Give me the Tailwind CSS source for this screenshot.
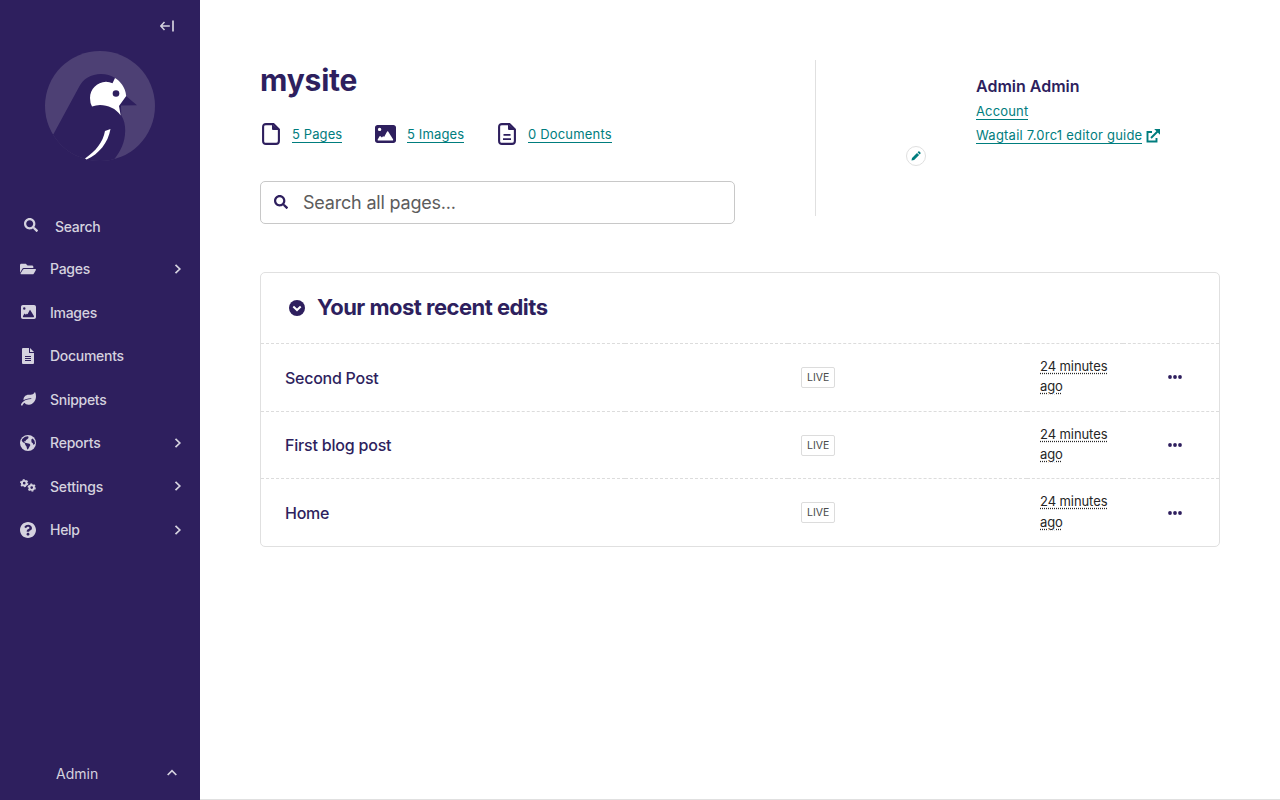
<!DOCTYPE html>
<html lang="en">
<head>
<meta charset="utf-8">
<title>Dashboard</title>
<script src="https://cdn.jsdelivr.net/npm/@tailwindcss/browser@4"></script>
</head>
<body class="font-['Inter','Liberation_Sans',sans-serif] bg-white text-[#2e1f5e]">
<svg class="hidden">
  <symbol id="search" viewBox="0 0 512 512"><path d="M505 442.7L405.3 343c-4.5-4.5-10.6-7-17-7H372c27.6-35.3 44-79.7 44-128C416 93.1 322.9 0 208 0S0 93.1 0 208s93.1 208 208 208c48.3 0 92.7-16.4 128-44v16.3c0 6.4 2.5 12.5 7 17l99.7 99.7c9.4 9.4 24.6 9.4 33.9 0l28.3-28.3c9.4-9.4 9.4-24.6.1-34zM208 336c-70.7 0-128-57.2-128-128 0-70.7 57.2-128 128-128 70.7 0 128 57.2 128 128 0 70.7-57.2 128-128 128z"/></symbol>
  <symbol id="image" viewBox="0 32 512 448" preserveAspectRatio="none"><path fill-rule="evenodd" d="M0 96C0 60.700 28.700 32 64 32H448c35.300 0 64 28.700 64 64V416c0 35.300-28.700 64-64 64H64c-35.300 0-64-28.700-64-64V96zM112 184a42 42 0 1 0 0-84 42 42 0 1 0 0 84zM74 420q-14-6-8-28l46-78q10-12 22 0l34 30 28-30q8-8 14 4l12 10 74-132q12-18 24 0l120 190q10 28-8 34z"/></symbol>
  <symbol id="page" viewBox="0 0 18 22"><path d="M4 1.100H11.500L16.900 6.500V18Q16.900 20.900 14 20.900H4Q1.100 20.900 1.100 18V4Q1.100 1.100 4 1.100z" fill="none" stroke="currentColor" stroke-width="2.100"/><path fill="currentColor" d="M10 1l7 6h-6q-1 0-1-1z"/></symbol>
  <symbol id="chev" viewBox="0 0 8 12"><path d="M1.500 1.800L5.800 6l-4.300 4.200" fill="none" stroke="currentColor" stroke-width="1.700"/></symbol>
  <symbol id="dots" viewBox="0 0 14 4"><circle cx="2" cy="2" r="1.900"/><circle cx="7" cy="2" r="1.900"/><circle cx="12" cy="2" r="1.900"/></symbol>
</svg>
<div class="flex h-[800px] w-[1280px] overflow-hidden">
  <aside class="flex w-[200px] shrink-0 flex-col bg-[#2e1f5e] text-[14px] font-medium tracking-[-0.280px] text-[#d5d2df]">
    <div class="flex h-[51px] justify-end pt-5 pr-[25px]">
      <svg class="h-3 w-[15px]" viewBox="0 0 15 12" fill="none" stroke="currentColor"><path d="M4.500 2L.8 6l3.700 4M.8 6H9.800" stroke-width="1.500"/><path d="M13 0.500v11" stroke-width="1.700"/></svg>
    </div>
    <svg class="mx-auto size-[110px]" viewBox="45 51 110 110">
      <clipPath id="disc"><circle cx="100" cy="106" r="55"/></clipPath>
      <circle cx="100" cy="106" r="55" fill="#4d4074"/>
      <g clip-path="url(#disc)">
        <path fill="#2e1f5e" d="M53.500 134L79 87C83 79 91 74 101 74q8 0 14 4l11 18 11 9.300-16 .2.300 10C124.500 120 125.300 126 125.200 131 125 143 120.500 151 114.500 159L114 163H60L40 140z"/>
      </g>
      <path fill="#fff" d="M115 78C120 81 125.500 87 126.200 96L119 106l1.700 9.500C116 108.500 108 105 100 105q-4 0-8 1.500Q90 103 90 98C90 89 97 82 106 81.700q3.500 0 6.500 1.500z"/>
      <circle cx="116" cy="93.500" r="3.300" fill="#2e1f5e"/>
      <path fill="#fff" d="M105 131l5.500-2C108 143 99 154 86.500 159.500L85 158.500C96 151 103 142 105 131z"/>
    </svg>
    <nav class="mt-[44px] flex flex-col">
      <a class="flex h-[42px] items-center pl-6"><svg class="mr-[17px] mb-[2px] size-[14px]" fill="currentColor"><use href="#search"/></svg><span class="mt-px">Search</span></a>
      <a class="flex h-[43.500px] items-center pr-[18px] pl-5"><svg class="mr-[14px] size-4" viewBox="0 0 576 512" fill="currentColor"><path d="M572.694 292.093L500.270 416.248A63.997 63.997 0 0 1 444.989 448H45.025c-18.523 0-30.064-20.093-20.731-36.093l72.424-124.155A64 64 0 0 1 152 256h399.964c18.523 0 30.064 20.093 20.730 36.093zM152 224h328v-48c0-26.510-21.490-48-48-48H272l-64-64H48C21.490 64 0 85.490 0 112v278.046l69.077-118.418C86.214 242.250 117.989 224 152 224z"/></svg><span class="flex-1">Pages</span><svg class="h-3 w-2"><use href="#chev"/></svg></a>
      <a class="flex h-[43.500px] items-center pl-[21px]"><svg class="mr-[14px] mb-px h-[14px] w-[15px]" fill="currentColor"><use href="#image"/></svg><span>Images</span></a>
      <a class="flex h-[43.500px] items-center pl-[22px]"><svg class="mr-4 h-4 w-3" viewBox="0 0 12 16"><path fill="currentColor" fill-rule="evenodd" d="M1 0H7V4.500Q7 5 7.500 5H12V15Q12 16 11 16H1Q0 16 0 15V1Q0 0 1 0zM3 8V9H9V8zM3 10V11H9V10zM3 12V13H9V12zM8 0L12 4H8z"/></svg><span>Documents</span></a>
      <a class="flex h-[43.500px] items-center pl-[21px]"><svg class="mr-[14px] mb-px h-[14px] w-[15px]" viewBox="0 0 576 512" fill="currentColor"><path d="M546.200 9.700c-5.600-12.500-21.600-13-28.300-1.200C486.900 62.400 431.400 96 368 96h-80C182 96 96 182 96 288c0 7 .8 13.700 1.500 20.500C161.300 262.800 253.400 224 384 224c8.800 0 16 7.200 16 16s-7.200 16-16 16C132.600 256 26 410.100 2.400 468c-6.600 16.300 1.200 34.900 17.500 41.600 16.400 6.800 35-1.100 41.800-17.300 1.500-3.600 20.900-47.900 71.900-90.600 32.400 43.900 94 85.800 174.900 77.200C465.500 467.500 576 326.700 576 154.300c0-50.200-10.800-102.200-29.800-144.600z"/></svg><span>Snippets</span></a>
      <a class="flex h-[43.500px] items-center pr-[18px] pl-5"><svg class="mr-[14px] size-4" viewBox="0 0 16 16"><circle cx="8" cy="8" r="8" fill="currentColor"/><path fill="#2e1f5e" d="M2.300 4L5 1.700 8.200 1.300 8.500 3 7.200 4.200 5.700 5.200 6 6.300 4.500 6 4.300 7.200 6 8 9.500 8.700 10.400 10 9.300 12 8.200 14 7.200 14.500 6.500 11.500 5.300 10 5 8.600 2.600 7 1.700 5.500zM11.300 4.500L12.700 3.600 14.500 5.800 15 8.500 13.600 10 12.800 8.300 11.500 7.300z"/></svg><span class="flex-1 tracking-[-0.220px]">Reports</span><svg class="h-3 w-2"><use href="#chev"/></svg></a>
      <a class="flex h-[43.500px] items-center pr-[18px] pl-5"><svg class="mr-[14px] mb-[2px] h-[13px] w-4" viewBox="0 0 16 13" fill="none" stroke="currentColor"><circle cx="4.200" cy="4.200" r="2.300" stroke-width="1.900"/><circle cx="4.200" cy="4.200" r="3.500" stroke-width="1.300" stroke-dasharray="1.830 1.830"/><circle cx="11.700" cy="8.600" r="2.300" stroke-width="1.900"/><circle cx="11.700" cy="8.600" r="3.500" stroke-width="1.300" stroke-dasharray="1.830 1.830"/></svg><span class="flex-1 tracking-[-0.170px]">Settings</span><svg class="h-3 w-2"><use href="#chev"/></svg></a>
      <a class="flex h-[43.500px] items-center pr-[18px] pl-5"><svg class="mr-[14px] size-4" viewBox="8 8 496 496" fill="currentColor"><path d="M504 256c0 136.997-111.043 248-248 248S8 392.997 8 256C8 119.083 119.043 8 256 8s248 111.083 248 248zM262.655 90c-54.497 0-89.255 22.957-116.549 63.758-3.536 5.286-2.353 12.415 2.715 16.258l34.699 26.310c5.205 3.947 12.621 3.008 16.665-2.122 17.864-22.658 30.113-35.797 57.303-35.797 20.429 0 45.698 13.148 45.698 32.958 0 14.976-12.363 22.667-32.534 33.976C247.128 238.528 216 254.941 216 296v4c0 6.627 5.373 12 12 12h56c6.627 0 12-5.373 12-12v-1.333c0-28.462 83.186-29.647 83.186-106.667 0-58.002-60.165-102-116.531-102zM256 338c-25.365 0-46 20.635-46 46 0 25.364 20.635 46 46 46s46-20.636 46-46c0-25.365-20.635-46-46-46z"/></svg><span class="flex-1">Help</span><svg class="h-3 w-2"><use href="#chev"/></svg></a>
    </nav>
    <button class="mt-auto mb-px flex h-[52px] items-center justify-between pr-6 pl-14 font-normal tracking-normal"><span>Admin</span><svg class="-mr-px mb-[2px] h-[7px] w-[10px]" viewBox="0 0 10 7" fill="none" stroke="currentColor" stroke-width="1.700"><path d="M.7 6L5 1.600 9.300 6"/></svg></button>
  </aside>
  <main class="flex-1 border-b border-[#e0e0e0] px-[60px] pt-[60px]">
    <header class="flex h-[164px]">
      <div class="w-[475px]">
        <h1 class="h-[42px] text-[30px] leading-[41px] font-bold tracking-[-0.200px]">mysite</h1>
        <ul class="mt-5 flex h-6 items-center text-[13px] tracking-[0.150px] text-[#007d7e]">
          <li class="flex w-[115px] items-center"><svg class="mr-3 ml-[2px] h-[22px] w-[18px] text-[#2e1f5e]"><use href="#page"/></svg><a class="h-[18px] border-b border-current leading-[19px] tracking-[0.100px]">5 Pages</a></li>
          <li class="flex w-[122px] items-center"><svg class="mr-[11px] h-[18px] w-[21px] text-[#2e1f5e]" fill="currentColor"><use href="#image"/></svg><a class="h-[18px] border-b border-current leading-[19px]">5 Images</a></li>
          <li class="flex items-center"><svg class="mr-3 ml-px h-[22px] w-[18px] text-[#2e1f5e]"><use href="#page"/><path fill="currentColor" d="M5.500 11h7v1.700h-7zM5 15.200h8v1.700H5z"/></svg><a class="h-[18px] border-b border-current leading-[19px] tracking-[0.180px]">0 Documents</a></li>
        </ul>
        <div class="mt-[35px] flex h-[43px] items-center rounded-[5px] border border-[#c8c8c8] pl-[13px]">
          <svg class="mr-[15px] mb-px size-[14px]" fill="currentColor"><use href="#search"/></svg><span class="text-[18px] tracking-[-0.200px] text-[#5c5c5c]">Search all pages...</span>
        </div>
      </div>
      <section class="ml-20 flex h-[156px] flex-1 border-l border-[#e0e0e0] pt-4 pl-[90px]">
        <div class="mt-[70px] mr-[50px] flex size-5 items-center justify-center rounded-full border border-[#e0e0e0] text-[#007d7e]"><svg class="size-[10px]" viewBox="0 0 10 10" fill="currentColor"><path d="M.5 9.500L1 6.900 6 1.900 8.100 4 3.100 9zM6.600 1.300L7.300.6Q7.900 0 8.500.6L9.400 1.500Q10 2.100 9.400 2.700L8.700 3.400z"/></svg></div>
        <div class="text-[13px] text-[#007d7e]">
          <h2 class="h-[21px] text-[16px] leading-[21px] font-semibold text-[#2e1f5e]">Admin Admin</h2>
          <div class="mt-[5px] flex h-6"><a class="h-[18px] border-b border-current leading-[19px] tracking-[0.150px]">Account</a></div>
          <div class="flex h-6"><a class="h-[18px] border-b border-current leading-[19px] tracking-[0.220px]">Wagtail 7.0rc1 editor guide</a><svg class="mt-[3px] ml-[3.500px] size-[14px]" viewBox="0 0 14 14" fill="none" stroke="currentColor" stroke-width="1.900"><path d="M6 3H1.500v9.500H10.500V9M5 9L11.500 2.500"/><path d="M8.200 0H14v5.800z" fill="currentColor" stroke="none"/></svg></div>
        </div>
      </section>
    </header>
    <section class="mt-12 h-[275px] rounded-[5px] border border-[#e0e0e0]">
      <h2 class="flex h-[69px] items-center pl-7 text-[22px] font-bold tracking-[-0.520px]"><svg class="mr-3 size-4" viewBox="0 0 16 16"><circle cx="8" cy="8" r="8" fill="currentColor"/><path d="M4.300 6.500L8 10l3.700-3.500" fill="none" stroke="#fff" stroke-width="2"/></svg><span>Your most recent edits</span></h2>
      <div class="mt-px grid h-[67.500px] grid-cols-[364px_163px_239px_96px_96px] *:flex *:items-center *:border-t *:border-dashed *:border-[#dcdcdc]">
        <div class="pt-[2px] pl-6 text-[16px] font-medium tracking-[-0.260px]">Second Post</div><div></div>
        <div class="pl-[13px]"><span class="h-[21px] rounded-[2px] border border-[#dcdcdc] px-[5px] text-[10.500px] leading-[20px] text-[#4a4a4a]">LIVE</span></div>
        <div class="pb-[2px] pl-[13px] text-[13px] leading-[20px] tracking-[-0.080px] text-[#262626]"><span class="underline decoration-dotted underline-offset-2">24 minutes<br>ago</span></div>
        <div class="pl-[45px]"><svg class="h-1 w-[14px]" fill="currentColor"><use href="#dots"/></svg></div>
      </div>
      <div class="grid h-[67.500px] grid-cols-[364px_163px_239px_96px_96px] *:flex *:items-center *:border-t *:border-dashed *:border-[#dcdcdc]">
        <div class="pl-6 text-[16px] font-medium tracking-[-0.200px]">First blog post</div><div></div>
        <div class="pt-px pl-[13px]"><span class="h-[21px] rounded-[2px] border border-[#dcdcdc] px-[5px] text-[10.500px] leading-[20px] text-[#4a4a4a]">LIVE</span></div>
        <div class="pb-px pl-[13px] text-[13px] leading-[20px] tracking-[-0.080px] text-[#262626]"><span class="underline decoration-dotted underline-offset-2">24 minutes<br>ago</span></div>
        <div class="pl-[45px]"><svg class="h-1 w-[14px]" fill="currentColor"><use href="#dots"/></svg></div>
      </div>
      <div class="grid h-[67.500px] grid-cols-[364px_163px_239px_96px_96px] *:flex *:items-center *:border-t *:border-dashed *:border-[#dcdcdc]">
        <div class="pt-[2px] pl-6 text-[16px] font-medium tracking-[-0.260px]">Home</div><div></div>
        <div class="pl-[13px]"><span class="h-[21px] rounded-[2px] border border-[#dcdcdc] px-[5px] text-[10.500px] leading-[20px] text-[#4a4a4a]">LIVE</span></div>
        <div class="pl-[13px] text-[13px] leading-[21px] tracking-[-0.080px] text-[#262626]"><span class="underline decoration-dotted underline-offset-2">24 minutes<br>ago</span></div>
        <div class="pt-px pl-[45px]"><svg class="h-1 w-[14px]" fill="currentColor"><use href="#dots"/></svg></div>
      </div>
    </section>
  </main>
</div>
</body>
</html>
